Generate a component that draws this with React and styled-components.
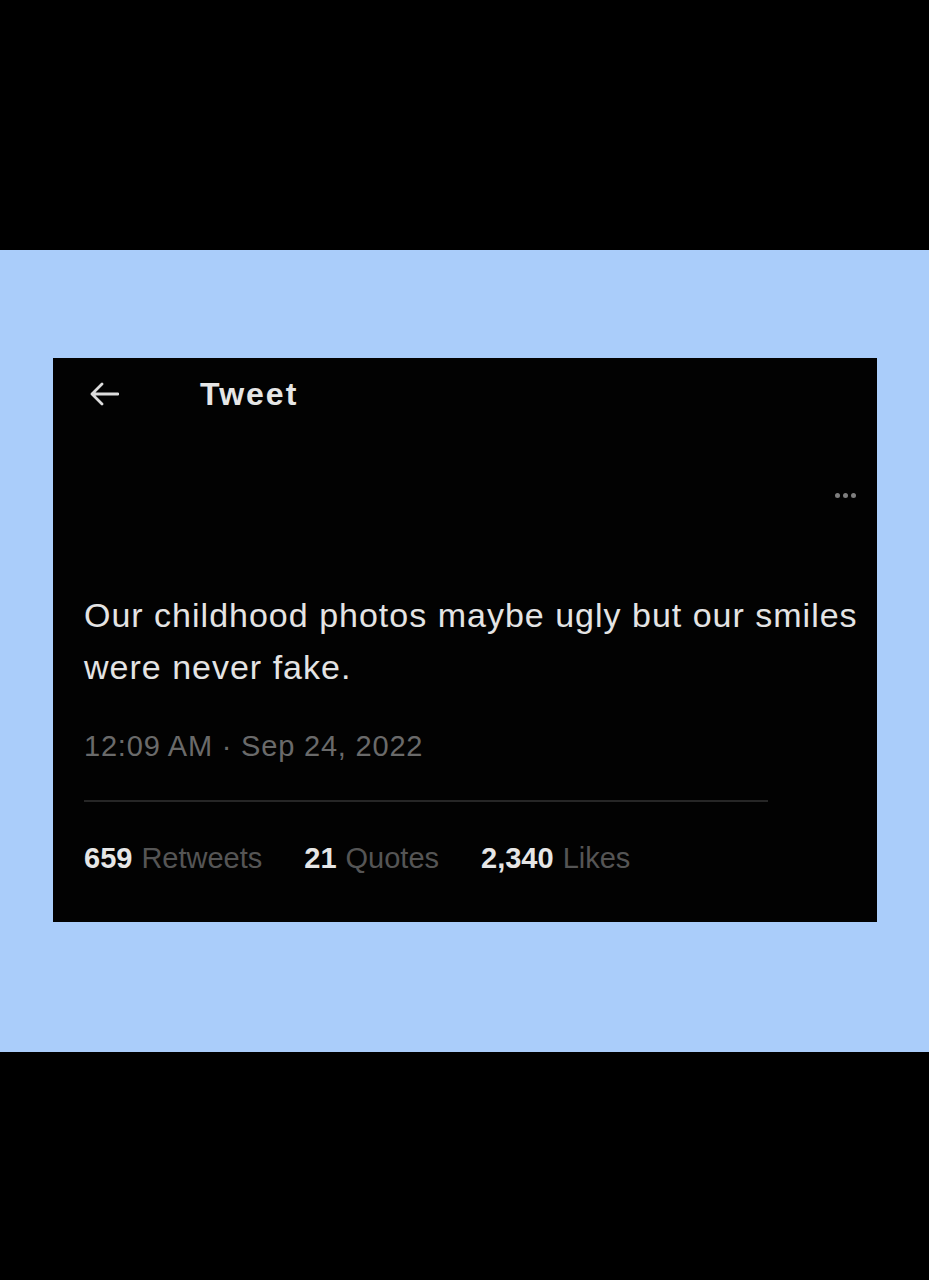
import React from "react";
import styled, { createGlobalStyle } from "styled-components";

const GlobalStyle = createGlobalStyle`
  html, body {
    margin: 0;
    padding: 0;
    background: #000000;
  }
  body {
    font-family: "Liberation Sans", Arial, sans-serif;
  }
`;

const Page = styled.div`
  display: flex;
  flex-direction: column;
  width: 929px;
  height: 1280px;
  background: #000000;
`;

const Band = styled.div`
  height: ${(p) => p.h}px;
  background: ${(p) => p.bg};
  flex-shrink: 0;
`;

const BlueBand = styled.div`
  height: 802px;
  background: #aacdfa;
  padding: 108px 52px 0 53px;
  box-sizing: border-box;
  flex-shrink: 0;
`;

const Card = styled.div`
  width: 824px;
  height: 564px;
  background: #020202;
  box-sizing: border-box;
  padding: 0 21px 0 31px;
  display: flex;
  flex-direction: column;
  color: #e7e9ea;
`;

const Header = styled.div`
  display: flex;
  align-items: center;
  height: 72px;
`;

const BackButton = styled.div`
  width: 111px;
  padding-left: 5px;
  display: flex;
  align-items: center;
  color: #dcdcdc;
`;

const Title = styled.div`
  font-size: 32px;
  font-weight: 700;
  color: #e6e6e6;
  letter-spacing: 2px;
`;

const MoreRow = styled.div`
  display: flex;
  justify-content: flex-end;
  margin-top: 55px;
  height: 20px;
  align-items: center;
`;

const Dot = styled.span`
  width: 5px;
  height: 5px;
  border-radius: 50%;
  background: #7e7e7e;
  margin-left: 3px;
`;

const Body = styled.p`
  margin: 84px 0 0;
  font-size: 34px;
  line-height: 52px;
  color: #e4e4e4;
  letter-spacing: 1px;
  white-space: nowrap;
`;

const Meta = styled.div`
  margin-top: 37px;
  font-size: 29px;
  color: #6a6a6a;
  letter-spacing: 0.8px;
`;

const Divider = styled.div`
  margin-top: 37px;
  width: 684px;
  height: 2px;
  background: #262626;
`;

const Stats = styled.div`
  display: flex;
  gap: 42px;
  margin-top: 40px;
  font-size: 29px;
`;

const Stat = styled.span`
  color: #555555;

  b {
    color: #e6e6e6;
    font-weight: 700;
    margin-right: 9px;
  }
`;

const stats = [
  { n: "659", label: "Retweets" },
  { n: "21", label: "Quotes" },
  { n: "2,340", label: "Likes" }
];

export default function App() {
  return (
    <Page>
      <GlobalStyle />
      <Band h={250} bg="#000000" />
      <BlueBand>
        <Card>
          <Header>
            <BackButton>
              <svg width="30" height="26" viewBox="0 0 30 26" fill="none">
                <path
                  d="M29 13H3M13 3L3 13l10 10"
                  stroke="currentColor"
                  strokeWidth="2.8"
                  strokeLinecap="round"
                  strokeLinejoin="round"
                />
              </svg>
            </BackButton>
            <Title>Tweet</Title>
          </Header>
          <MoreRow>
            <Dot />
            <Dot />
            <Dot />
          </MoreRow>
          <Body>
            Our childhood photos maybe ugly but our smiles
            <br />
            were never fake.
          </Body>
          <Meta>12:09 AM · Sep 24, 2022</Meta>
          <Divider />
          <Stats>
            {stats.map((s) => (
              <Stat key={s.label}>
                <b>{s.n}</b>
                {s.label}
              </Stat>
            ))}
          </Stats>
        </Card>
      </BlueBand>
    </Page>
  );
}
